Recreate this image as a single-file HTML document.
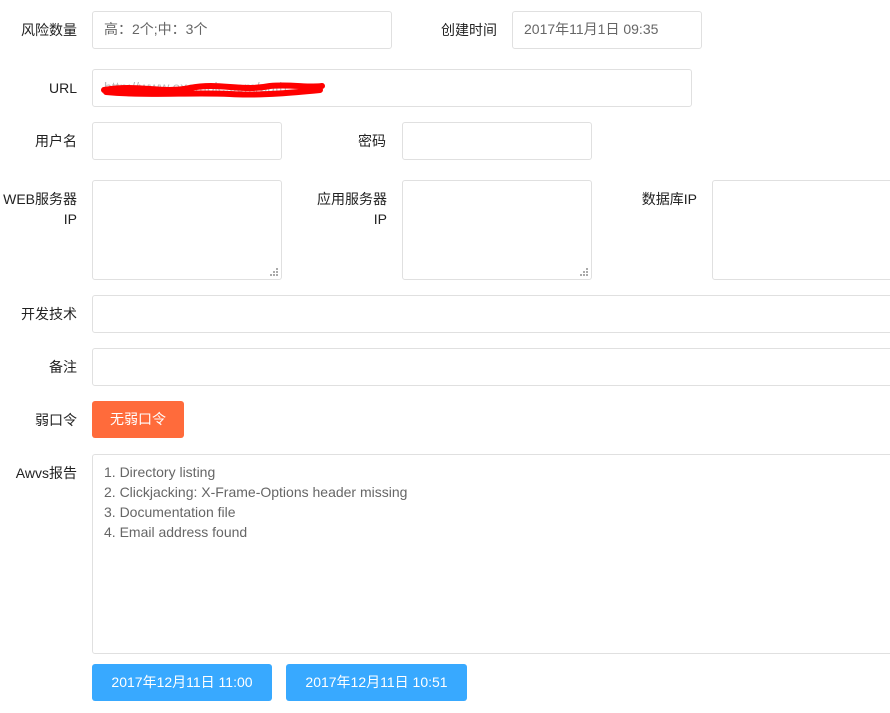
<!DOCTYPE html>
<html><head><meta charset="utf-8"><style>
body{margin:0;width:890px;height:713px;background:#fff;overflow:hidden;position:relative;font-family:"Liberation Sans","Noto Sans CJK SC",sans-serif;font-size:14px;color:#222}
.l{position:absolute;text-align:right;line-height:20px}
.b{position:absolute;border:1px solid #e0e0e0;border-radius:3px;box-sizing:border-box;color:#666;padding-left:11px;line-height:35px}
.h{position:absolute;width:8px;height:8px}
.btn{position:absolute;color:#fff;border-radius:3px;text-align:center;line-height:37px;height:37px}
</style></head><body>
<div class="l" style="left:0;width:77px;top:20px">风险数量</div>
<div class="b" style="left:92px;top:11px;width:300px;height:38px">高：2个;中：3个</div>
<div class="l" style="left:400px;width:97px;top:20px">创建时间</div>
<div class="b" style="left:512px;top:11px;width:190px;height:38px">2017年11月1日 09:35</div>

<div class="l" style="left:0;width:77px;top:78px">URL</div>
<div class="b" style="left:92px;top:69px;width:600px;height:38px;color:#bbb">http://www.example.com/path</div>
<svg style="position:absolute;left:100px;top:78px" width="230" height="22"><path d="M4 12 C40 6 60 16 90 10 C120 4 140 14 170 8 C190 6 210 10 222 8 M6 14 C50 18 90 14 130 16 C160 18 200 14 220 12" stroke="#f00" stroke-width="6" fill="none" stroke-linecap="round"/></svg>

<div class="l" style="left:0;width:77px;top:131px">用户名</div>
<div class="b" style="left:92px;top:122px;width:190px;height:38px"></div>
<div class="l" style="left:300px;width:86px;top:131px">密码</div>
<div class="b" style="left:402px;top:122px;width:190px;height:38px"></div>

<div class="l" style="left:0;width:77px;top:189px">WEB服务器<br>IP</div>
<div class="b" style="left:92px;top:180px;width:190px;height:100px"></div>
<div class="l" style="left:300px;width:87px;top:189px">应用服务器<br>IP</div>
<div class="b" style="left:402px;top:180px;width:190px;height:100px"></div>
<div class="l" style="left:600px;width:97px;top:189px">数据库IP</div>
<div class="b" style="left:712px;top:180px;width:190px;height:100px"></div>
<svg class="h" style="left:270px;top:268px" viewBox="0 0 8 8"><g fill="#aaa"><rect x="6" y="0" width="2" height="2"/><rect x="3" y="3" width="2" height="2"/><rect x="6" y="3" width="2" height="2"/><rect x="0" y="6" width="2" height="2"/><rect x="3" y="6" width="2" height="2"/><rect x="6" y="6" width="2" height="2"/></g></svg>
<svg class="h" style="left:580px;top:268px" viewBox="0 0 8 8"><g fill="#aaa"><rect x="6" y="0" width="2" height="2"/><rect x="3" y="3" width="2" height="2"/><rect x="6" y="3" width="2" height="2"/><rect x="0" y="6" width="2" height="2"/><rect x="3" y="6" width="2" height="2"/><rect x="6" y="6" width="2" height="2"/></g></svg>

<div class="l" style="left:0;width:77px;top:304px">开发技术</div>
<div class="b" style="left:92px;top:295px;width:820px;height:38px"></div>
<div class="l" style="left:0;width:77px;top:357px">备注</div>
<div class="b" style="left:92px;top:348px;width:820px;height:38px"></div>

<div class="l" style="left:0;width:77px;top:410px">弱口令</div>
<div class="btn" style="left:92px;top:401px;width:92px;background:#ff6b3b">无弱口令</div>

<div class="l" style="left:0;width:77px;top:463px">Awvs报告</div>
<div class="b" style="left:92px;top:454px;width:820px;height:200px;line-height:20px;padding-top:7px">1. Directory listing<br>2. Clickjacking: X-Frame-Options header missing<br>3. Documentation file<br>4. Email address found</div>

<div class="btn" style="left:92px;top:664px;width:180px;background:#38a9ff">2017年12月11日 11:00</div>
<div class="btn" style="left:286px;top:664px;width:181px;background:#38a9ff">2017年12月11日 10:51</div>
</body></html>
